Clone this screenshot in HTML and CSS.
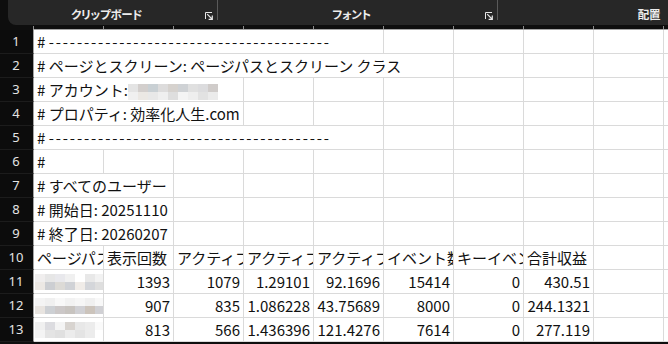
FILE: index.html
```html
<!DOCTYPE html>
<html lang="ja">

<head>
    <meta charset="UTF-8" />
    <meta name="viewport" content="width=device-width, initial-scale=1.0" />
    <title>ページとスクリーン</title>
    <link rel="stylesheet" href="styles.css">
</head>

<body>

    <!-- リボン -->
    <div class="ribbon-bar">
        <div class="ribbon">
            <div class="group group-clip">
                <span class="group-label">クリップボード</span>
                <svg class="launcher" width="8" height="8" viewBox="0 0 8 8">
                    <path d="M0.5 7 V0.5 H7" fill="none" stroke="#e6e6e6" stroke-width="1" />
                    <path d="M2.2 2.2 L7 7 M7.3 3.6 V7.3 H3.6" fill="none" stroke="#e6e6e6" stroke-width="1.2" />
                </svg>
                <span class="sep"></span>
            </div>
            <div class="group group-font">
                <span class="group-label">フォント</span>
                <svg class="launcher" width="8" height="8" viewBox="0 0 8 8">
                    <path d="M0.5 7 V0.5 H7" fill="none" stroke="#e6e6e6" stroke-width="1" />
                    <path d="M2.2 2.2 L7 7 M7.3 3.6 V7.3 H3.6" fill="none" stroke="#e6e6e6" stroke-width="1.2" />
                </svg>
                <span class="sep"></span>
            </div>
            <div class="group group-align">
                <span class="group-label">配置</span>
            </div>
        </div>
    </div>

    <!-- 列見出しの目盛り -->
    <div class="col-strip">
        <span class="corner"></span>
        <span class="tick"></span><span class="tick"></span><span class="tick"></span><span class="tick"></span><span class="tick"></span>
        <span class="tick"></span><span class="tick"></span><span class="tick"></span><span class="tick"></span><span class="tick"></span>
    </div>
    <div class="col-line"></div>

    <!-- シート -->
    <div class="sheet">
        <div class="row">
            <div class="rowhead">1</div>
            <div class="cell span-5"># <span class="dashes">----------------------------------------</span></div>
            <div class="cell"></div><div class="cell"></div><div class="cell"></div><div class="cell"></div><div class="cell"></div>
        </div>
        <div class="row">
            <div class="rowhead">2</div>
            <div class="cell span-6"># ページとスクリーン: ページパスとスクリーン クラス</div>
            <div class="cell"></div><div class="cell"></div><div class="cell"></div><div class="cell"></div>
        </div>
        <div class="row">
            <div class="rowhead">3</div>
            <div class="cell span-3"># アカウント:<span class="mosaic mosaic-9">
                <i style="background:#e4e4e4"></i><i style="background:#d3cfcd"></i><i style="background:#c9d0d4"></i><i style="background:#dddcdc"></i><i style="background:#d6d2ce"></i><i style="background:#cfd2d5"></i><i style="background:#e0e0e0"></i><i style="background:#dcdcde"></i><i style="background:#d0ccca"></i>
                <i style="background:#f0f0f0"></i><i style="background:#ebe8e4"></i><i style="background:#e8e8e8"></i><i style="background:#efefef"></i><i style="background:#dedede"></i><i style="background:#f4f4f4"></i><i style="background:#eeeeee"></i><i style="background:#e2e2e2"></i><i style="background:#ebebeb"></i>
            </span></div>
            <div class="cell"></div><div class="cell"></div><div class="cell"></div><div class="cell"></div><div class="cell"></div><div class="cell"></div><div class="cell"></div>
        </div>
        <div class="row">
            <div class="rowhead">4</div>
            <div class="cell span-3"># プロパティ: 効率化人生.com</div>
            <div class="cell"></div><div class="cell"></div><div class="cell"></div><div class="cell"></div><div class="cell"></div><div class="cell"></div><div class="cell"></div>
        </div>
        <div class="row">
            <div class="rowhead">5</div>
            <div class="cell span-5"># <span class="dashes">----------------------------------------</span></div>
            <div class="cell"></div><div class="cell"></div><div class="cell"></div><div class="cell"></div><div class="cell"></div>
        </div>
        <div class="row">
            <div class="rowhead">6</div>
            <div class="cell">#</div>
            <div class="cell"></div><div class="cell"></div><div class="cell"></div><div class="cell"></div><div class="cell"></div><div class="cell"></div><div class="cell"></div><div class="cell"></div><div class="cell"></div>
        </div>
        <div class="row">
            <div class="rowhead">7</div>
            <div class="cell span-2"># すべてのユーザー</div>
            <div class="cell"></div><div class="cell"></div><div class="cell"></div><div class="cell"></div><div class="cell"></div><div class="cell"></div><div class="cell"></div><div class="cell"></div>
        </div>
        <div class="row">
            <div class="rowhead">8</div>
            <div class="cell span-2"># 開始日: 20251110</div>
            <div class="cell"></div><div class="cell"></div><div class="cell"></div><div class="cell"></div><div class="cell"></div><div class="cell"></div><div class="cell"></div><div class="cell"></div>
        </div>
        <div class="row">
            <div class="rowhead">9</div>
            <div class="cell span-2"># 終了日: 20260207</div>
            <div class="cell"></div><div class="cell"></div><div class="cell"></div><div class="cell"></div><div class="cell"></div><div class="cell"></div><div class="cell"></div><div class="cell"></div>
        </div>
        <div class="row">
            <div class="rowhead">10</div>
            <div class="cell clip">ページパスとスクリーン クラス</div>
            <div class="cell clip">表示回数</div>
            <div class="cell clip">アクティブ ユーザー</div>
            <div class="cell clip">アクティブ ユーザーあたりのビュー</div>
            <div class="cell clip">アクティブ ユーザーあたりの平均エンゲージメント時間</div>
            <div class="cell clip">イベント数</div>
            <div class="cell clip">キーイベント</div>
            <div class="cell clip">合計収益</div>
            <div class="cell"></div><div class="cell"></div>
        </div>
        <div class="row">
            <div class="rowhead">11</div>
            <div class="cell pad-none"><span class="mosaic mosaic-7">
                <i style="background:#f0eeee"></i><i style="background:#e6e6e6"></i><i style="background:#e8e8ec"></i><i style="background:#f0f0f0"></i><i style="background:#ffffff"></i><i style="background:#e8e8e8"></i><i style="background:#f2f2f2"></i>
                <i style="background:#ece8e4"></i><i style="background:#ccced2"></i><i style="background:#dcdad6"></i><i style="background:#d0d2d6"></i><i style="background:#f0ece8"></i><i style="background:#d4d6da"></i><i style="background:#dedede"></i>
            </span></div>
            <div class="cell num">1393</div>
            <div class="cell num">1079</div>
            <div class="cell num">1.29101</div>
            <div class="cell num">92.1696</div>
            <div class="cell num">15414</div>
            <div class="cell num">0</div>
            <div class="cell num">430.51</div>
            <div class="cell"></div><div class="cell"></div>
        </div>
        <div class="row">
            <div class="rowhead">12</div>
            <div class="cell pad-none"><span class="mosaic mosaic-7">
                <i style="background:#f4f4f4"></i><i style="background:#f0f0f0"></i><i style="background:#f8f8f8"></i><i style="background:#f2f2f2"></i><i style="background:#f6f6f6"></i><i style="background:#f0f0f0"></i><i style="background:#f8f8f8"></i>
                <i style="background:#e8e4e0"></i><i style="background:#cdd0d4"></i><i style="background:#ccc8c8"></i><i style="background:#c8c4c0"></i><i style="background:#d0d0d4"></i><i style="background:#ccc4bc"></i><i style="background:#d0d0d4"></i>
            </span></div>
            <div class="cell num">907</div>
            <div class="cell num">835</div>
            <div class="cell num">1.086228</div>
            <div class="cell num">43.75689</div>
            <div class="cell num">8000</div>
            <div class="cell num">0</div>
            <div class="cell num">244.1321</div>
            <div class="cell"></div><div class="cell"></div>
        </div>
        <div class="row">
            <div class="rowhead">13</div>
            <div class="cell pad-none"><span class="mosaic mosaic-7">
                <i style="background:#f0f0f0"></i><i style="background:#dcdce0"></i><i style="background:#f4f4f4"></i><i style="background:#d8d4d0"></i><i style="background:#e8e8e8"></i><i style="background:#ececec"></i><i style="background:#fafafa"></i>
                <i style="background:#f4f4f4"></i><i style="background:#e4e4e4"></i><i style="background:#e0e0e0"></i><i style="background:#ececec"></i><i style="background:#e4e4e4"></i><i style="background:#ececec"></i><i style="background:#ffffff"></i>
            </span></div>
            <div class="cell num">813</div>
            <div class="cell num">566</div>
            <div class="cell num">1.436396</div>
            <div class="cell num">121.4276</div>
            <div class="cell num">7614</div>
            <div class="cell num">0</div>
            <div class="cell num">277.119</div>
            <div class="cell"></div><div class="cell"></div>
        </div>
    </div>

</body>

</html>
```

FILE: styles.css
```css
body {
    margin: 0;
    width: 668px;
    height: 344px;
    overflow: hidden;
    background: #0e0e0e;
    font-family: "Noto Sans CJK JP", "Noto Sans", sans-serif;
}

/* リボン */
.ribbon-bar {
    height: 25px;
    padding-left: 8px;
    background: #0e0e0e;
}

.ribbon {
    display: flex;
    height: 25px;
    width: 760px;
    background: #272727;
    border-bottom-left-radius: 8px;
}

.group {
    display: flex;
    align-items: flex-start;
    flex-shrink: 0;
}

.group-clip {
    width: 210px;
}

.group-font {
    width: 280px;
}

.group-align {
    width: 302px;
}

.group-label {
    flex: 1;
    text-align: center;
    color: #ececec;
    font-size: 11.5px;
    font-weight: 700;
    line-height: 14px;
    padding-top: 7px;
    font-feature-settings: "palt";
    letter-spacing: -0.3px;
}

.launcher {
    margin-top: 12px;
    margin-right: 4px;
}

.sep {
    width: 1px;
    height: 20px;
    background: #5a5a5a;
}

/* 列見出し */
.col-strip {
    display: flex;
    height: 4px;
    background: #0e0e0e;
}

.corner {
    width: 33px;
    flex-shrink: 0;
}

.tick {
    width: 70px;
    flex-shrink: 0;
    box-sizing: border-box;
    border-left: 1px solid #8c8c8c;
    margin-top: 1px;
}

.col-line {
    height: 1px;
    margin-left: 33px;
    background: #a4a4a4;
}

/* シート */
.sheet {
    background: #fff;
}

.row {
    display: grid;
    grid-template-columns: 34px repeat(10, 70px);
    height: 24px;
}

.rowhead {
    box-sizing: border-box;
    background: #0c0c0c;
    border-right: 1px solid #a4a4a4;
    border-bottom: 1px solid #1c1c1c;
    color: #e4e4e4;
    font-family: "Noto Sans", sans-serif;
    font-size: 13px;
    line-height: 23px;
    text-align: center;
    padding-right: 1px;
}

.cell {
    box-sizing: border-box;
    background: #fff;
    border-right: 1px solid #dadada;
    border-bottom: 1px solid #dadada;
    padding: 0 3px;
    color: #111;
    font-size: 15px;
    line-height: 23px;
    white-space: nowrap;
    overflow: hidden;
}

.span-2 { grid-column: span 2; }
.span-3 { grid-column: span 3; }
.span-5 { grid-column: span 5; }
.span-6 { grid-column: span 6; }

.dashes {
    letter-spacing: 1.85px;
}

.clip {
    text-overflow: clip;
}

.num {
    text-align: right;
}

.pad-none {
    padding: 0 0 0 1px;
    display: flex;
    align-items: center;
}

/* ぼかし */
.mosaic {
    display: inline-grid;
    grid-auto-rows: 8px;
    vertical-align: middle;
}

.mosaic-9 {
    grid-template-columns: repeat(9, 10px);
}

.mosaic-7 {
    grid-template-columns: repeat(7, 10px);
}

.mosaic i {
    display: block;
}
```
